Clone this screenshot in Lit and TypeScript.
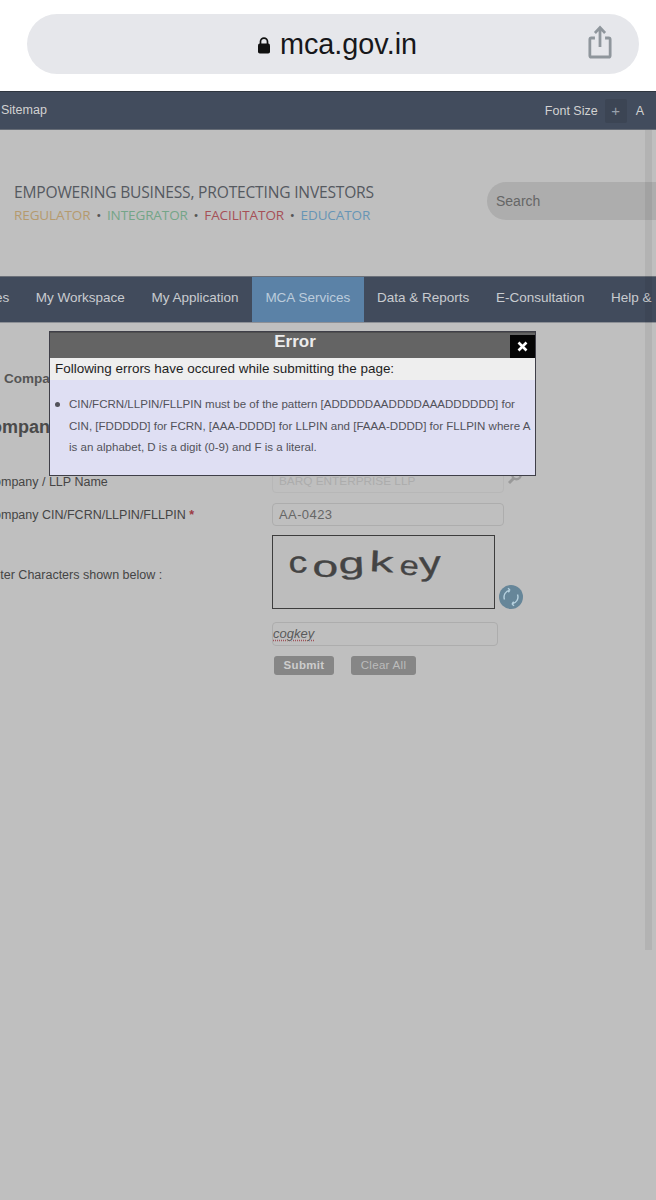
import { LitElement, html, css, svg } from "lit";
import { customElement } from "lit/decorators.js";

const LETTERS: [string, number, number, number, number, number][] = [
  ["c", 16, 37, -3, 1.25, 1.0],
  ["o", 39, 40, 3, 1.55, 1.0],
  ["g", 66, 38, -3, 1.55, 1.0],
  ["k", 96, 35, 3, 1.6, 0.95],
  ["e", 126, 38, 5, 1.15, 0.9],
  ["y", 147, 39, -4, 1.45, 1.1],
];

@customElement("app-root")
export class AppRoot extends LitElement {
  static styles = css`
    :host { display: block; position: relative; width: 656px; height: 1200px; overflow: hidden; background: #bfbfbf; font-family: "Liberation Sans", Arial, sans-serif; color: #3f3f3f; }
    * { box-sizing: border-box; }
    .chrome { height: 91px; background: #fff; padding: 14px 17px 17px 27px; }
    .pill { position: relative; height: 60px; border-radius: 30px; background: #e6e7eb; display: flex; align-items: center; justify-content: center; gap: 9px; padding-left: 8px; }
    .lock { width: 14px; height: 17px; margin-top: 2px; }
    .url { font-size: 28.8px; color: #17171a; line-height: 34px; margin-top: -1px; }
    .share { position: absolute; right: 27px; top: 11px; width: 24px; height: 36px; }
    .topbar { height: 39px; background: #424c5d; border-top: 1px solid #2f3640; border-bottom: 1px solid #666c76; display: flex; align-items: center; color: #d2d2d2; font-size: 12.5px; padding: 0 12px 0 1px; }
    .sitemap { margin-top: -2px; }
    .fs { margin-left: auto; display: flex; align-items: center; }
    .plus { width: 22px; height: 24px; margin: 0 9px 0 7px; background: #3c4554; color: #98a0ab; text-align: center; line-height: 23px; font-size: 15px; border-radius: 2px; }
    .head { height: 146px; display: flex; justify-content: space-between; padding: 50px 0 0 14px; }
    .t1 { font-family: "Open Sans", sans-serif; font-size: 15.6px; line-height: 24px; color: #55595f; letter-spacing: -0.2px; white-space: nowrap; }
    .t2 { font-family: "Open Sans", sans-serif; font-size: 13.5px; line-height: 20px; margin-top: 1px; white-space: nowrap; letter-spacing: -0.1px; display: flex; }
    .reg { color: #b59a6e; } .int { color: #74a588; } .fac { color: #a65057; } .edu { color: #6795b5; }
    .dot { color: #555; width: 16.500px; text-align: center; }
    .search { width: 170px; height: 38px; margin-top: 2px; margin-right: -1px; background: #adadad; border-radius: 19px 0 0 19px; color: #666; font-size: 14px; line-height: 38px; padding-left: 9px; }
    .nav { height: 47px; background: #414b5c; border-top: 1px solid #6b7079; display: flex; color: #c9ccd0; font-size: 13.5px; white-space: nowrap; overflow: hidden; border-bottom: 1px solid #8d9096; }
    .nav span { display: block; flex: none; padding: 13px 13.300px 0; height: 46px; }
    .nav .first { padding: 13px 13.300px 0 0; width: 27.500px; margin-left: -5px; }
    .nav .act { background: #5b82a7; width: 112px; text-align: center; padding: 13px 0 0; color: #bcccdc; }
    .main { position: relative; padding-top: 47px; height: 400px; }
    .crumb { font-size: 13.5px; font-weight: bold; color: #555; height: 45px; padding-left: 4px; line-height: 18px; }
    .title { font-size: 18px; font-weight: bold; color: #4a4a4a; margin-left: -22px; line-height: 24px; height: 54px; }
    .grid { display: grid; grid-template-columns: 272px 1fr; }
    .lab { font-size: 12.5px; color: #454545; line-height: 16px; white-space: nowrap; overflow: hidden; }
    .lab.l1 { padding-top: 5px; height: 33px; text-indent: -15px; }
    .lab.l2 { padding-top: 5px; height: 32px; text-indent: -15px; }
    .lab.l3 { padding-top: 32px; height: 87px; text-indent: -15px; }
    .star { color: #9c3a44; font-weight: bold; }
    .inp { height: 23px; width: 232px; flex: none; border: 1px solid #adadad; border-radius: 4px; font-size: 13px; line-height: 21px; padding-left: 6px; color: #666; letter-spacing: 0.4px; }
    .inpwrap { display: flex; gap: 3px; height: 33px; padding-top: 1px; align-items: flex-start; }
    .dis { color: #acacac; border-color: #b7b7b7; font-size: 11.800px; letter-spacing: 0; }
    .glass { width: 16px; height: 16px; margin-top: -1px; }
    .capRow { display: flex; height: 87px; align-items: flex-start; }
    .cap { width: 223px; height: 74px; border: 1px solid #3d3d3d; background: #bdbdbd; }
    .refresh { width: 24px; height: 24px; margin: 50px 0 0 4px; }
    .cap2 { width: 226px; height: 24px; border: 1px solid #adadad; border-radius: 4px; font-size: 13px; font-style: italic; color: #5a5a5a; line-height: 22px; }
    .cap2 u { text-decoration: underline dotted #a0525a; text-underline-offset: 2px; }
    .btns { display: flex; gap: 17px; padding: 10px 0 0 2px; }
    .btn { height: 19px; border-radius: 3px; background: #868686; font-size: 11.5px; line-height: 19px; text-align: center; color: #bcbcbc; letter-spacing: 0.3px; }
    .sub { width: 60px; font-weight: bold; color: #cdcdcd; }
    .clr { width: 65px; }
    .scroll { position: absolute; left: 645px; top: 130px; width: 7px; height: 820px; background: rgba(0, 0, 0, 0.06); }
    .dialog { position: absolute; left: 49px; top: 331px; width: 487px; height: 145px; border: 1px solid #3f3f48; background: #dfdff3; }
    .dhead { position: relative; height: 26px; background: #646464; border-top: 1px solid #4f4f4f; color: #ececec; font-size: 17px; font-weight: bold; text-align: center; line-height: 18px; padding-left: 5px; }
    .close { position: absolute; right: 0; top: 2px; width: 25px; height: 23px; background: #050505; }
    .close svg { display: block; margin: 6px auto 0; width: 11px; height: 11px; }
    .dsub { height: 22px; background: #eeeeee; color: #1d1d1d; font-size: 13.45px; line-height: 21px; padding-left: 5px; white-space: nowrap; }
    .dlist { margin: 0; padding: 14px 0 0 19px; font-size: 11.55px; line-height: 21.5px; color: #52525a; list-style: none; position: relative; }
    .dlist li { white-space: nowrap; }
    .bullet { position: absolute; left: 5px; top: 22px; width: 5px; height: 5px; border-radius: 50%; background: #52525a; }
  `;

  render() {
    return html`
      <div class="chrome">
        <div class="pill">
          <svg class="lock" viewBox="0 0 14 17"><path d="M3.500 7V4.600a3.500 3.500 0 0 1 7 0V7" fill="none" stroke="#111" stroke-width="1.700"/><rect x="1" y="6.600" width="12" height="10" rx="1.800" fill="#111"/></svg>
          <span class="url">mca.gov.in</span>
          <svg class="share" viewBox="0 0 26 36" preserveAspectRatio="none" fill="none" stroke="#8f969c" stroke-width="3"><path d="M7.500 13H3.600a1.600 1.600 0 0 0-1.600 1.600v15.800A1.600 1.600 0 0 0 3.600 32h18.800a1.600 1.600 0 0 0 1.600-1.600V14.600A1.600 1.600 0 0 0 22.400 13H18.500"/><path d="M13 22V3M7.500 8L13 2.500L18.500 8"/></svg>
        </div>
      </div>
      <div class="topbar"><span class="sitemap">Sitemap</span><div class="fs"><span>Font Size</span><span class="plus">+</span><span>A</span></div></div>
      <div class="head">
        <div>
          <div class="t1">EMPOWERING BUSINESS, PROTECTING INVESTORS</div>
          <div class="t2"><span class="reg">REGULATOR</span><span class="dot">•</span><span class="int">INTEGRATOR</span><span class="dot">•</span><span class="fac">FACILITATOR</span><span class="dot">•</span><span class="edu">EDUCATOR</span></div>
        </div>
        <div class="search">Search</div>
      </div>
      <div class="nav">
        <span class="first">es</span><span>My Workspace</span><span>My Application</span><span class="act">MCA Services</span><span>Data &amp; Reports</span><span>E-Consultation</span><span>Help &amp; Support</span>
      </div>
      <div class="main">
        <div class="crumb">Company</div>
        <div class="title">Company</div>
        <div class="grid">
          <div class="lab l1">Company / LLP Name</div>
          <div class="inpwrap"><div class="inp dis">BARQ ENTERPRISE LLP</div>
            <svg class="glass" viewBox="0 0 16 16" fill="none" stroke="#999" stroke-width="2.400"><circle cx="9.500" cy="6" r="4.200"/><path d="M6.500 9.500L2 14" stroke-width="3"/></svg></div>
          <div class="lab l2">Company CIN/FCRN/LLPIN/FLLPIN <span class="star">*</span></div>
          <div class="inpwrap"><div class="inp">AA-0423</div></div>
          <div class="lab l3">Enter Characters shown below :</div>
          <div class="capRow">
            <div class="cap">
              <svg width="221" height="72" viewBox="0 0 221 72" font-family="Liberation Sans, sans-serif" font-size="30" fill="#444" stroke="#444" stroke-width="0.300">
                ${LETTERS.map(([ch, x, y, r, sx, sy]) => svg`<text transform="translate(${x} ${y}) rotate(${r}) scale(${sx} ${sy})">${ch}</text>`)}
              </svg>
            </div>
            <svg class="refresh" viewBox="0 0 24 24"><circle cx="12" cy="12" r="12" fill="#668699"/><path d="M5.500 14.500A7 7 0 0 1 11 5.100M11 5.100L9 3.300M11 5.100L9.300 7.300M18.500 9.500A7 7 0 0 1 13 18.900M13 18.900L15 20.700M13 18.900L14.700 16.700" fill="none" stroke="#b7d2e0" stroke-width="1.400"/></svg>
          </div>
          <div></div>
          <div>
            <div class="cap2"><u>cogkey</u></div>
            <div class="btns"><div class="btn sub">Submit</div><div class="btn clr">Clear All</div></div>
          </div>
        </div>
      </div>
      <div class="scroll"></div>
      <div class="dialog">
        <div class="dhead">Error<div class="close"><svg viewBox="0 0 11 11"><path d="M1.500 1.500L9.500 9.500M9.500 1.500L1.500 9.500" stroke="#fff" stroke-width="2.600"/></svg></div></div>
        <div class="dsub">Following errors have occured while submitting the page:</div>
        <ul class="dlist">
          <span class="bullet"></span>
          <li>CIN/FCRN/LLPIN/FLLPIN must be of the pattern [ADDDDDAADDDDAAADDDDDD] for</li>
          <li>CIN, [FDDDDD] for FCRN, [AAA-DDDD] for LLPIN and [FAAA-DDDD] for FLLPIN where A</li>
          <li>is an alphabet, D is a digit (0-9) and F is a literal.</li>
        </ul>
      </div>
    `;
  }
}
